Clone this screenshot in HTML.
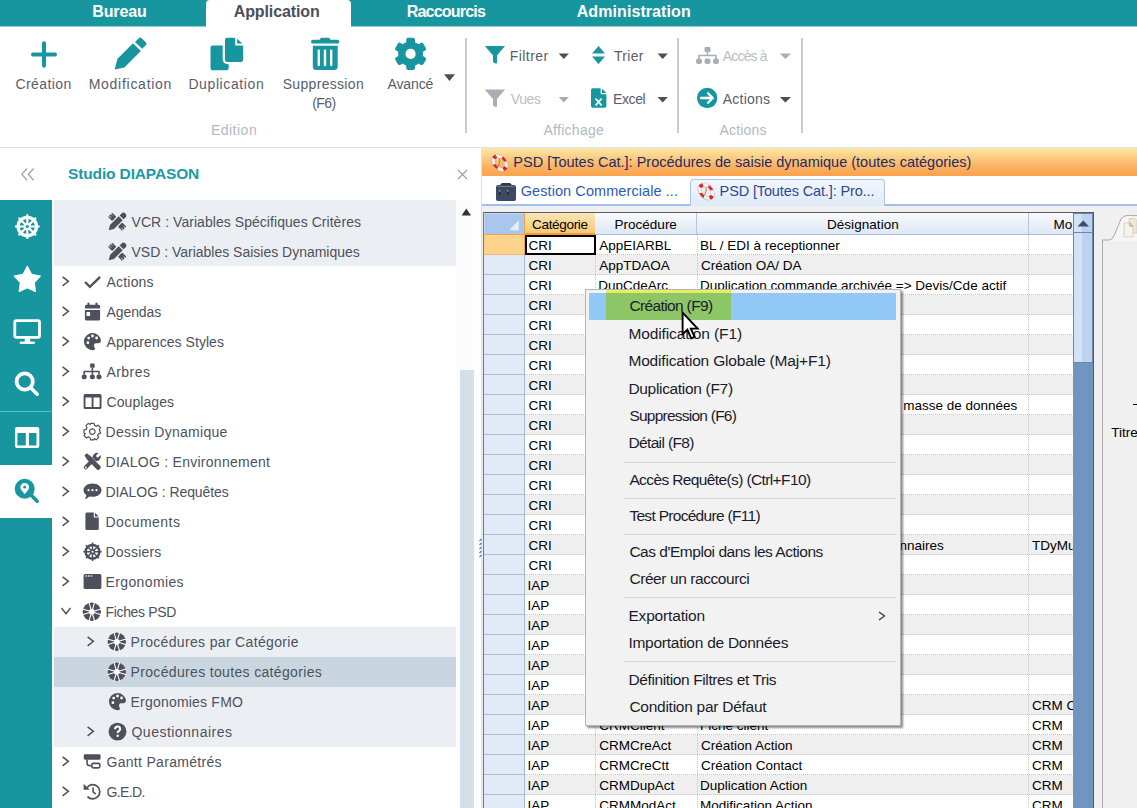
<!DOCTYPE html>
<html><head><meta charset="utf-8">
<style>
*{margin:0;padding:0;box-sizing:border-box}
html,body{width:1137px;height:808px;overflow:hidden}
body{position:relative;background:#fff;font-family:"Liberation Sans",sans-serif;color:#333}
.a{position:absolute;white-space:nowrap}
svg{position:absolute;overflow:visible}
</style></head><body>
<div class="a" style="left:0px;top:0px;width:1137px;height:26px;background:#1896a0;"></div>
<div class="a" style="left:0px;top:26px;width:1137px;height:1px;background:#8fcdd2;"></div>
<div class="a" style="left:206px;top:0px;width:145px;height:27px;background:#fff;border-radius:4px 4px 0 0"></div>
<div class="a" style="left:92.30px;top:4px;font:bold 16px/1 'Liberation Sans';color:#fff;letter-spacing:-0.150px;">Bureau</div>
<div class="a" style="left:233.70px;top:4px;font:bold 16px/1 'Liberation Sans';color:#4a4f5c;letter-spacing:-0.104px;">Application</div>
<div class="a" style="left:406.70px;top:4px;font:bold 16px/1 'Liberation Sans';color:#fff;letter-spacing:-0.785px;">Raccourcis</div>
<div class="a" style="left:576.70px;top:4px;font:bold 16px/1 'Liberation Sans';color:#fff;letter-spacing:0.083px;">Administration</div>
<svg style="left:0;top:0" width="1137" height="150">
<g fill="#1896a0">
 <path d="M44 43.3V65.7M33 54.5H55" stroke="#1896a0" stroke-width="4" stroke-linecap="round" fill="none"/>
 <path d="M117.5 58.7 L133 43.2 L140.8 51 L124.4 67.4 L114.6 69.6 Z"/>
 <path d="M135 42 L139 38 Q140.2 36.8 141.4 38 L146 42.6 Q147.2 43.8 146 45 L142.2 48.8 Z"/>
 <path d="M212.5 45.5 H222.7 V59 Q222.7 64.2 228.7 64.2 V68 Q228.7 70.2 226.5 70.2 H212.5 Q210.5 70.2 210.5 68 V47.5 Q210.5 45.5 212.5 45.5Z"/>
 <path d="M227 37.7 H235.2 V45.5 H243.2 V59.8 Q243.2 61.9 241.2 61.9 H227 Q225 61.9 225 59.8 V39.7 Q225 37.7 227 37.7Z"/>
 <path d="M237.2 38.7 L242.4 43.5 H237.2Z"/>
 <path d="M319.5 39.8 L321 37.7 H329 L330.5 39.8 H337.4 Q339.3 39.8 339.3 41.7 Q339.3 43.6 337.4 43.6 H312.9 Q311 43.6 311 41.7 Q311 39.8 312.9 39.8Z"/>
 <path d="M312.8 45.7 H337.7 V66.5 Q337.7 70.1 334.1 70.1 H316.4 Q312.8 70.1 312.8 66.5Z"/>
 <rect x="317.6" y="49.6" width="2.4" height="16.6" rx="1.1" fill="#fff"/>
 <rect x="323.8" y="49.6" width="2.4" height="16.6" rx="1.1" fill="#fff"/>
 <rect x="330" y="49.6" width="2.4" height="16.6" rx="1.1" fill="#fff"/>
 <g transform="translate(410.6 53.9)">
  <circle r="12.4"/>
  <rect x="-4.4" y="-16.2" width="8.8" height="8" rx="2"/>
  <rect x="-4.4" y="-16.2" width="8.8" height="8" rx="2" transform="rotate(60)"/>
  <rect x="-4.4" y="-16.2" width="8.8" height="8" rx="2" transform="rotate(120)"/>
  <rect x="-4.4" y="-16.2" width="8.8" height="8" rx="2" transform="rotate(180)"/>
  <rect x="-4.4" y="-16.2" width="8.8" height="8" rx="2" transform="rotate(240)"/>
  <rect x="-4.4" y="-16.2" width="8.8" height="8" rx="2" transform="rotate(300)"/>
  <circle r="5.1" fill="#fff"/>
 </g>
</g>
<path d="M444 74.3H455L449.5 81Z" fill="#4a4e5a"/>
</svg>
<div class="a" style="left:15.50px;top:77px;font:14px/1 'Liberation Sans';color:#5a5e6a;letter-spacing:0.396px;">Création</div>
<div class="a" style="left:88.70px;top:77px;font:14px/1 'Liberation Sans';color:#5a5e6a;letter-spacing:0.726px;">Modification</div>
<div class="a" style="left:188.40px;top:77px;font:14px/1 'Liberation Sans';color:#5a5e6a;letter-spacing:0.602px;">Duplication</div>
<div class="a" style="left:282.70px;top:77px;font:14px/1 'Liberation Sans';color:#5a5e6a;letter-spacing:0.316px;">Suppression</div>
<div class="a" style="left:312.20px;top:96px;font:14px/1 'Liberation Sans';color:#5a5e6a;letter-spacing:-0.600px;">(F6)</div>
<div class="a" style="left:387.50px;top:77px;font:14px/1 'Liberation Sans';color:#5a5e6a;letter-spacing:-0.111px;">Avancé</div>
<div class="a" style="left:210.90px;top:123px;font:14px/1 'Liberation Sans';color:#b3b8c0;letter-spacing:0.497px;">Edition</div>
<div class="a" style="left:465px;top:38px;width:2px;height:95px;background:#c9cdd3;"></div>
<div class="a" style="left:677px;top:38px;width:2px;height:95px;background:#c9cdd3;"></div>
<div class="a" style="left:801px;top:38px;width:2px;height:95px;background:#c9cdd3;"></div>
<div class="a" style="left:0px;top:147px;width:1137px;height:1px;background:#dce4eb;"></div>
<svg style="left:0;top:0" width="1137" height="150">
 <path d="M484.8 46 H505 L497 55.5 V62.5 Q497 64 495.5 63.5 L493 62 V55.5Z" fill="#1896a0"/>
 <path d="M484.8 89.6 H505 L497 99 V106 Q497 107.5 495.5 107 L493 105.5 V99Z" fill="#a9aeb6"/>
 <path d="M558.7 53.5H568.9L563.8 59Z" fill="#4a4e5a"/>
 <path d="M558.7 97H568.9L563.8 102.5Z" fill="#a9aeb6"/>
 <path d="M592 53.5 L598.5 46 L605 53.5Z M592 56.5 L598.5 64 L605 56.5Z" fill="#1896a0"/>
 <path d="M657.6 53.5H667.8L662.7 59Z" fill="#4a4e5a"/>
 <path d="M657.6 97H667.8L662.7 102.5Z" fill="#4a4e5a"/>
 <path d="M591 90 Q591 88.3 593 88.3 H600.6 V93 Q600.6 94.3 601.9 94.3 H606.4 V106 Q606.4 107.7 604.7 107.7 H592.7 Q591 107.7 591 106Z" fill="#1896a0"/>
 <path d="M601.9 88.5 L606.4 93 H601.9Z" fill="#1896a0"/>
 <path d="M595.6 98.5 L601.6 105.5 M601.6 98.5 L595.6 105.5" stroke="#fff" stroke-width="1.9"/>
 <path d="M779.8 53.5H791L785.4 59Z" fill="#a9aeb6"/>
 <path d="M779.8 97H791L785.4 102.5Z" fill="#4a4e5a"/>
 <g fill="#a9aeb6">
  <rect x="704.5" y="47" width="6" height="5" rx="1"/>
  <path d="M707.5 52 V55.5 M699 59 V55.5 H716 V59" stroke="#a9aeb6" stroke-width="1.6" fill="none"/>
  <rect x="696" y="58.5" width="6" height="5.4" rx="2.2"/>
  <rect x="704.5" y="58.5" width="6" height="5.4" rx="2.2"/>
  <rect x="713" y="58.5" width="6" height="5.4" rx="2.2"/>
 </g>
 <circle cx="707.2" cy="98" r="10.2" fill="#1896a0"/>
 <path d="M701 98 H712.5 M708 93.2 L712.8 98 L708 102.8" stroke="#fff" stroke-width="2.3" fill="none" stroke-linecap="round" stroke-linejoin="round"/>
</svg>
<div class="a" style="left:509.70px;top:49px;font:14px/1 'Liberation Sans';color:#5a5e6a;letter-spacing:0.448px;">Filtrer</div>
<div class="a" style="left:510.70px;top:92px;font:14px/1 'Liberation Sans';color:#b9bec6;letter-spacing:-0.364px;">Vues</div>
<div class="a" style="left:614.00px;top:49px;font:14px/1 'Liberation Sans';color:#5a5e6a;letter-spacing:0.277px;">Trier</div>
<div class="a" style="left:613.00px;top:92px;font:14px/1 'Liberation Sans';color:#5a5e6a;letter-spacing:-0.381px;">Excel</div>
<div class="a" style="left:722.80px;top:49px;font:14px/1 'Liberation Sans';color:#b9bec6;letter-spacing:-0.836px;">Accès à</div>
<div class="a" style="left:722.80px;top:92px;font:14px/1 'Liberation Sans';color:#5a5e6a;letter-spacing:0.215px;">Actions</div>
<div class="a" style="left:543.50px;top:123px;font:14px/1 'Liberation Sans';color:#b3b8c0;letter-spacing:0.271px;">Affichage</div>
<div class="a" style="left:719.50px;top:123px;font:14px/1 'Liberation Sans';color:#b3b8c0;letter-spacing:0.165px;">Actions</div>
<svg style="left:0;top:0" width="480" height="200">
 <path d="M27 168.5 L21.8 174.3 L27 180.2 M33.6 168.5 L28.4 174.3 L33.6 180.2" stroke="#a3abb6" stroke-width="1.5" fill="none"/>
 <path d="M458 170 L467 179 M467 170 L458 179" stroke="#9a9fa7" stroke-width="1.15" fill="none"/>
</svg>
<div class="a" style="left:68.00px;top:166px;font:bold 15.5px/1 'Liberation Sans';color:#1a9aa8;letter-spacing:-0.135px;">Studio DIAPASON</div>
<div class="a" style="left:0px;top:200px;width:52px;height:608px;background:#1896a0;"></div>
<div class="a" style="left:0px;top:465px;width:52px;height:53px;background:#fff;"></div>
<div class="a" style="left:0px;top:411px;width:52px;height:1px;background:#5fb7bf;"></div>
<div class="a" style="left:54px;top:200px;width:402px;height:66px;background:#ebeff3;"></div>
<div class="a" style="left:54px;top:627px;width:402px;height:120px;background:#ebeff3;"></div>
<div class="a" style="left:54px;top:657px;width:402px;height:30px;background:#c9d6e0;"></div>
<div class="a" style="left:457px;top:201px;width:20px;height:607px;background:#fbfcfd;"></div>
<div class="a" style="left:460px;top:370px;width:14px;height:438px;background:#d5dfe8;"></div>
<svg style="left:0;top:0" width="480" height="808"><path d="M461.6 215.5 H471 L466.3 208.4Z" fill="#333"/></svg>
<svg style="left:0;top:0" width="60" height="808">
 <g transform="translate(27.3 226.5)">
  <circle r="10.8" fill="#fff"/>
  <circle r="7.6" fill="#1896a0"/>
  <g stroke="#fff" stroke-width="2.2">
   <path d="M0 -12.3V12.3M-12.3 0H12.3M-8.7 -8.7L8.7 8.7M8.7 -8.7L-8.7 8.7"/>
  </g>
  <circle r="3.7" fill="#fff"/>
  <circle r="1.6" fill="#1896a0"/>
 </g>
 <path d="M27.30 266.70 L31.53 274.48 L40.23 276.10 L34.15 282.52 L35.29 291.30 L27.30 287.50 L19.31 291.30 L20.45 282.52 L14.37 276.10 L23.07 274.48Z" fill="#fff" stroke="#fff" stroke-width="1.4" stroke-linejoin="round"/>
 <rect x="14.8" y="320.6" width="24.7" height="16.7" rx="1.5" fill="none" stroke="#fff" stroke-width="2.8"/>
 <rect x="24.7" y="338" width="5.4" height="4.5" fill="#fff"/>
 <rect x="19.8" y="341.6" width="15" height="2.3" fill="#fff"/>
 <circle cx="24.7" cy="381.5" r="8.1" fill="none" stroke="#fff" stroke-width="3.8"/>
 <path d="M31.5 388.5 L37.2 394.2" stroke="#fff" stroke-width="3.6" stroke-linecap="round"/>
 <path fill="#fff" fill-rule="evenodd" d="M17 426.9H37.3Q39.3 426.9 39.3 428.9V446.1Q39.3 448.1 37.3 448.1H17Q15 448.1 15 446.1V428.9Q15 426.9 17 426.9Z M17.4 433V445.5H25.8V433Z M28.9 433V445.5H36.5V433Z"/>
 <circle cx="24.7" cy="488.7" r="10" fill="#1896a0"/>
 <path d="M31.5 495.5 L37.2 501.2" stroke="#1896a0" stroke-width="3.6" stroke-linecap="round"/>
 <path d="M24.7 494.3 L21 489.5 Q20.3 488.4 20.3 487.3 A4.4 4.4 0 0 1 29.1 487.3 Q29.1 488.4 28.4 489.5Z" fill="#fff"/>
 <circle cx="24.7" cy="487.2" r="1.4" fill="#1896a0"/>
</svg>
<div class="a" style="left:131.50px;top:215px;font:14px/1 'Liberation Sans';color:#4e515c;letter-spacing:0.051px;">VCR : Variables Spécifiques Critères</div>
<div class="a" style="left:131.50px;top:245px;font:14px/1 'Liberation Sans';color:#4e515c;letter-spacing:-0.006px;">VSD : Variables Saisies Dynamiques</div>
<div class="a" style="left:106.50px;top:275px;font:14px/1 'Liberation Sans';color:#4e515c;letter-spacing:0.198px;">Actions</div>
<div class="a" style="left:106.50px;top:305px;font:14px/1 'Liberation Sans';color:#4e515c;letter-spacing:-0.095px;">Agendas</div>
<div class="a" style="left:106.50px;top:335px;font:14px/1 'Liberation Sans';color:#4e515c;letter-spacing:0.042px;">Apparences Styles</div>
<div class="a" style="left:106.50px;top:365px;font:14px/1 'Liberation Sans';color:#4e515c;letter-spacing:0.433px;">Arbres</div>
<div class="a" style="left:106.50px;top:395px;font:14px/1 'Liberation Sans';color:#4e515c;letter-spacing:0.083px;">Couplages</div>
<div class="a" style="left:105.50px;top:425px;font:14px/1 'Liberation Sans';color:#4e515c;letter-spacing:0.293px;">Dessin Dynamique</div>
<div class="a" style="left:105.50px;top:455px;font:14px/1 'Liberation Sans';color:#4e515c;letter-spacing:0.274px;">DIALOG : Environnement</div>
<div class="a" style="left:105.50px;top:485px;font:14px/1 'Liberation Sans';color:#4e515c;letter-spacing:-0.075px;">DIALOG : Requêtes</div>
<div class="a" style="left:105.50px;top:515px;font:14px/1 'Liberation Sans';color:#4e515c;letter-spacing:0.449px;">Documents</div>
<div class="a" style="left:105.50px;top:545px;font:14px/1 'Liberation Sans';color:#4e515c;letter-spacing:0.192px;">Dossiers</div>
<div class="a" style="left:105.50px;top:575px;font:14px/1 'Liberation Sans';color:#4e515c;letter-spacing:0.377px;">Ergonomies</div>
<div class="a" style="left:105.50px;top:605px;font:14px/1 'Liberation Sans';color:#4e515c;letter-spacing:-0.344px;">Fiches PSD</div>
<div class="a" style="left:130.50px;top:635px;font:14px/1 'Liberation Sans';color:#4e515c;letter-spacing:0.334px;">Procédures par Catégorie</div>
<div class="a" style="left:130.50px;top:665px;font:14px/1 'Liberation Sans';color:#4e515c;letter-spacing:0.341px;">Procédures toutes catégories</div>
<div class="a" style="left:130.50px;top:695px;font:14px/1 'Liberation Sans';color:#4e515c;letter-spacing:0.207px;">Ergonomies FMO</div>
<div class="a" style="left:131.50px;top:725px;font:14px/1 'Liberation Sans';color:#4e515c;letter-spacing:0.480px;">Questionnaires</div>
<div class="a" style="left:106.50px;top:755px;font:14px/1 'Liberation Sans';color:#4e515c;letter-spacing:0.301px;">Gantt Paramétrés</div>
<div class="a" style="left:106.50px;top:785px;font:14px/1 'Liberation Sans';color:#4e515c;letter-spacing:-0.603px;">G.E.D.</div>
<svg style="left:0;top:0" width="480" height="808"><g transform="translate(107.5 211.2)"><g transform="translate(9.4 10.85) rotate(-45)" fill="#4e515c"><rect x="-2.6" y="-9.9" width="6" height="5.8" rx="0.8"/><rect x="-2.6" y="4.1" width="6" height="5.8" rx="0.8"/><path d="M-1 -9.9V-7.3M1.6 -9.9V-7.9M-1 9.9V7.3M1.6 9.9V7.9" stroke="#ebeff3" stroke-width="0.9"/><path d="M-11.6 0 L-7 -2.8 H5.4 V2.8 H-7Z" stroke="#ebeff3" stroke-width="0.9" paint-order="stroke"/><path d="M6.6 -2.8 H9.4 Q12 -2.8 12 0 Q12 2.8 9.4 2.8 H6.6Z"/></g></g><g transform="translate(107.5 241.2)"><g transform="translate(9.4 10.85) rotate(-45)" fill="#4e515c"><rect x="-2.6" y="-9.9" width="6" height="5.8" rx="0.8"/><rect x="-2.6" y="4.1" width="6" height="5.8" rx="0.8"/><path d="M-1 -9.9V-7.3M1.6 -9.9V-7.9M-1 9.9V7.3M1.6 9.9V7.9" stroke="#ebeff3" stroke-width="0.9"/><path d="M-11.6 0 L-7 -2.8 H5.4 V2.8 H-7Z" stroke="#ebeff3" stroke-width="0.9" paint-order="stroke"/><path d="M6.6 -2.8 H9.4 Q12 -2.8 12 0 Q12 2.8 9.4 2.8 H6.6Z"/></g></g><path d="M62.6 276.8 L68.4 281.3 L62.6 285.8" fill="none" stroke="#4e515c" stroke-width="1.5"/><g transform="translate(82.5 271.2)"><path d="M2.6 10.8 L7.4 15.6 L17.6 5.6" fill="none" stroke="#4e515c" stroke-width="2.4"/></g><path d="M62.6 306.8 L68.4 311.3 L62.6 315.8" fill="none" stroke="#4e515c" stroke-width="1.5"/><g transform="translate(82.5 301.2)"><path fill="#4e515c" fill-rule="evenodd" d="M4 3.5H16Q17.6 3.5 17.6 5.1V17.8Q17.6 19.3 16 19.3H4Q2.4 19.3 2.4 17.8V5.1Q2.4 3.5 4 3.5Z M2.4 7.4H17.6V8.8H2.4Z M4 10.8V14.8H7.6V10.8Z"/><rect x="5" y="1.5" width="2" height="3" fill="#4e515c"/><rect x="13" y="1.5" width="2" height="3" fill="#4e515c"/></g><path d="M62.6 336.8 L68.4 341.3 L62.6 345.8" fill="none" stroke="#4e515c" stroke-width="1.5"/><g transform="translate(82.5 331.2)"><path fill="#4e515c" d="M9.8 1.8 A8.6 8.6 0 0 1 18.5 9.6 Q18.5 12 16 12 H13.5 Q11.5 12 11.5 14 Q11.5 15.5 12.3 16.6 Q13 18.8 10.3 19 A8.6 8.6 0 0 1 9.8 1.8Z"/><g fill="#fff"><circle cx="5.4" cy="11.5" r="1.4"/><circle cx="6.2" cy="6.9" r="1.4"/><circle cx="10" cy="4.8" r="1.4"/><circle cx="14.1" cy="6.8" r="1.4"/></g></g><path d="M62.6 366.8 L68.4 371.3 L62.6 375.8" fill="none" stroke="#4e515c" stroke-width="1.5"/><g transform="translate(82.5 361.2)"><g fill="#4e515c"><rect x="7.6" y="2.4" width="4.6" height="4.2" rx="0.8"/><rect x="-0.8" y="13.2" width="5" height="4.8" rx="2"/><rect x="7.4" y="13.2" width="5" height="4.8" rx="2"/><rect x="14" y="13.2" width="5" height="4.8" rx="2"/></g><path d="M9.9 6.5V13.5M1.7 13.5V10.2H16.5V13.5" fill="none" stroke="#4e515c" stroke-width="1.5"/></g><path d="M62.6 396.8 L68.4 401.3 L62.6 405.8" fill="none" stroke="#4e515c" stroke-width="1.5"/><g transform="translate(82.5 391.2)"><path fill="#4e515c" fill-rule="evenodd" d="M2.6 2.8H17.5Q19 2.8 19 4.3V16.3Q19 17.8 17.5 17.8H2.6Q1.1 17.8 1.1 16.3V4.3Q1.1 2.8 2.6 2.8Z M3 6.2V15.9H9.1V6.2Z M11 6.2V15.9H17.1V6.2Z"/></g><path d="M62.6 426.8 L68.4 431.3 L62.6 435.8" fill="none" stroke="#4e515c" stroke-width="1.5"/><g transform="translate(82.5 421.2)"><g transform="translate(9.8 10.4)" fill="none" stroke="#4e515c" stroke-width="1.2"><path d="M-1.6 -8.3 H1.6 L2.2 -6.2 L3.9 -5.3 L5.9 -6.3 L8.2 -4 L7.1 -2.1 L7.7 -0.1 L8.3 1.6 L6.2 2.3 L5.3 3.9 L6.3 5.9 L4 8.2 L2.1 7.1 L1.6 8.3 H-1.6 L-2.2 6.2 L-3.9 5.3 L-5.9 6.3 L-8.2 4 L-7.1 2.1 L-8.3 1.6 V-1.6 L-6.2 -2.2 L-5.3 -3.9 L-6.3 -5.9 L-4 -8.2 L-2.1 -7.1Z"/><circle r="2.8"/></g></g><path d="M62.6 456.8 L68.4 461.3 L62.6 465.8" fill="none" stroke="#4e515c" stroke-width="1.5"/><g transform="translate(82.5 451.2)"><g fill="#4e515c"><path d="M2 4.2 L4.2 2 L9 5.5 L11 8 L17.8 14.8 Q19 16 17.8 17.2 L16.8 18.2 Q15.6 19.4 14.4 18.2 L7.6 11.4 L5.2 9.2Z"/><path d="M11.5 10.5 L4.8 17.4 Q3.2 19 1.8 17.6 Q0.4 16.2 2 14.6 L8.9 7.9Z"/><path d="M10 6.5 A4.8 4.8 0 0 1 16.2 1.8 L13.6 4.4 L14 6 L15.6 6.4 L18.2 3.8 A4.8 4.8 0 0 1 13.5 10 Z"/></g><circle cx="3.3" cy="16.3" r="0.9" fill="#fff"/></g><path d="M62.6 486.8 L68.4 491.3 L62.6 495.8" fill="none" stroke="#4e515c" stroke-width="1.5"/><g transform="translate(82.5 481.2)"><path fill="#4e515c" d="M10 2.4 C15 2.4 19 5.3 19 9 C19 12.7 15 15.6 10 15.6 Q8.2 15.6 6.8 15.2 Q4.8 17.4 2 18 Q3.8 16 3.9 14 Q1 12 1 9 C1 5.3 5 2.4 10 2.4Z"/><g fill="#fff"><circle cx="6" cy="9" r="1.1"/><circle cx="10" cy="9" r="1.1"/><circle cx="14" cy="9" r="1.1"/></g></g><path d="M62.6 516.8000000000001 L68.4 521.3000000000001 L62.6 525.8000000000001" fill="none" stroke="#4e515c" stroke-width="1.5"/><g transform="translate(82.5 511.20000000000005)"><path fill="#4e515c" d="M4.2 1.3 H11.3 V6.4 H16.3 V17.3 Q16.3 18.8 14.8 18.8 H4.4 Q2.9 18.8 2.9 17.3 V2.8 Q2.9 1.3 4.2 1.3Z M12.4 1.5 L16.2 5.3 H12.4Z"/></g><path d="M62.6 546.8000000000001 L68.4 551.3000000000001 L62.6 555.8000000000001" fill="none" stroke="#4e515c" stroke-width="1.5"/><g transform="translate(82.5 541.2)"><g transform="translate(10 10.6)"><circle r="8.1" fill="#4e515c"/><circle r="5.6" fill="#fff"/><g stroke="#4e515c" stroke-width="1.6"><path d="M0 -9.2V9.2M-9.2 0H9.2M-6.5 -6.5L6.5 6.5M6.5 -6.5L-6.5 6.5"/></g><circle r="2.6" fill="#4e515c"/><circle r="1" fill="#fff"/></g></g><path d="M62.6 576.8000000000001 L68.4 581.3000000000001 L62.6 585.8000000000001" fill="none" stroke="#4e515c" stroke-width="1.5"/><g transform="translate(82.5 571.2)"><path fill="#4e515c" d="M2.6 2.7H17.4Q18.9 2.7 18.9 4.2V16.3Q18.9 17.8 17.4 17.8H2.6Q1.1 17.8 1.1 16.3V4.2Q1.1 2.7 2.6 2.7Z"/><g fill="#fff"><rect x="3" y="4.2" width="1.6" height="1.2"/><rect x="5.6" y="4.2" width="1.6" height="1.2"/><rect x="8.2" y="4.2" width="1.6" height="1.2"/></g></g><path d="M61.5 607.9000000000001 L66 613.7 L70.5 607.9000000000001" fill="none" stroke="#4e515c" stroke-width="1.5"/><g transform="translate(82.5 601.2)"><g transform="translate(9.3 10.6)"><circle r="9.2" fill="#4e515c"/><path d="M0 0L9.37 -2.87M0 0L9.37 2.87M0 0L2.87 9.37M0 0L-2.87 9.37M0 0L-9.37 2.87M0 0L-9.37 -2.87M0 0L-2.87 -9.37M0 0L2.87 -9.37" stroke="#fff" stroke-width="1.1"/><circle r="2.9" fill="#fff"/></g></g><path d="M87.6 636.8000000000001 L93.4 641.3000000000001 L87.6 645.8000000000001" fill="none" stroke="#4e515c" stroke-width="1.5"/><g transform="translate(107.5 631.2)"><g transform="translate(9.3 10.6)"><circle r="9.2" fill="#4e515c"/><path d="M0 0L9.37 -2.87M0 0L9.37 2.87M0 0L2.87 9.37M0 0L-2.87 9.37M0 0L-9.37 2.87M0 0L-9.37 -2.87M0 0L-2.87 -9.37M0 0L2.87 -9.37" stroke="#fff" stroke-width="1.1"/><circle r="2.9" fill="#fff"/></g></g><g transform="translate(107.5 661.2)"><g transform="translate(9.3 10.6)"><circle r="9.2" fill="#4e515c"/><path d="M0 0L9.37 -2.87M0 0L9.37 2.87M0 0L2.87 9.37M0 0L-2.87 9.37M0 0L-9.37 2.87M0 0L-9.37 -2.87M0 0L-2.87 -9.37M0 0L2.87 -9.37" stroke="#fff" stroke-width="1.1"/><circle r="2.9" fill="#fff"/></g></g><g transform="translate(107.5 691.2)"><path fill="#4e515c" d="M9.8 1.8 A8.6 8.6 0 0 1 18.5 9.6 Q18.5 12 16 12 H13.5 Q11.5 12 11.5 14 Q11.5 15.5 12.3 16.6 Q13 18.8 10.3 19 A8.6 8.6 0 0 1 9.8 1.8Z"/><g fill="#fff"><circle cx="5.4" cy="11.5" r="1.4"/><circle cx="6.2" cy="6.9" r="1.4"/><circle cx="10" cy="4.8" r="1.4"/><circle cx="14.1" cy="6.8" r="1.4"/></g></g><path d="M87.6 726.8000000000001 L93.4 731.3000000000001 L87.6 735.8000000000001" fill="none" stroke="#4e515c" stroke-width="1.5"/><g transform="translate(107.5 721.2)"><circle cx="10" cy="10.4" r="8.9" fill="#4e515c"/><path d="M7.6 8 Q7.6 5.4 10.1 5.4 Q12.6 5.4 12.6 7.8 Q12.6 9.2 11.2 10 Q10.2 10.6 10.2 11.8" fill="none" stroke="#fff" stroke-width="2"/><circle cx="10.2" cy="14.6" r="1.2" fill="#fff"/></g><path d="M62.6 756.8000000000001 L68.4 761.3000000000001 L62.6 765.8000000000001" fill="none" stroke="#4e515c" stroke-width="1.5"/><g transform="translate(82.5 751.2)"><rect x="1.3" y="3" width="16.8" height="5.5" rx="1.4" fill="#4e515c"/><path d="M4.6 8.4 V12.4 Q4.6 14.6 7.8 14.6 H9" fill="none" stroke="#4e515c" stroke-width="1.6"/><rect x="9.3" y="12.2" width="8.1" height="4.5" rx="1.6" fill="#fff" stroke="#4e515c" stroke-width="1.6"/></g><path d="M62.6 786.8000000000001 L68.4 791.3000000000001 L62.6 795.8000000000001" fill="none" stroke="#4e515c" stroke-width="1.5"/><g transform="translate(82.5 781.2)"><path d="M4.6 6.2 A7.1 7.1 0 1 1 5 15.4" fill="none" stroke="#4e515c" stroke-width="1.7"/><path d="M1.1 2.5 L1.1 8.6 L7.2 8.6Z" fill="#4e515c"/><path d="M10.6 6.2 V10.6 L13.2 13" fill="none" stroke="#4e515c" stroke-width="1.6"/></g></svg>
<div class="a" style="left:481px;top:147px;width:1px;height:661px;background:#d6e2ef;"></div>
<div class="a" style="left:474px;top:201px;width:7px;height:607px;background:#fdfdfe;"></div>
<div class="a" style="left:482px;top:148px;width:655px;height:28px;background:linear-gradient(#fde6a6 0%,#fcd58c 25%,#fbb667 60%,#fba24c 100%);"></div>
<div class="a" style="left:482px;top:176px;width:655px;height:28px;background:#fff;"></div>
<div class="a" style="left:482px;top:204px;width:655px;height:2px;background:#9dc0ef;"></div>
<div class="a" style="left:482px;top:206px;width:655px;height:602px;background:#f0f0f0;"></div>
<div class="a" style="left:690px;top:179px;width:195px;height:27px;background:linear-gradient(#f3f7fd,#dfe9f8);border:1px solid #a9c5ec;border-bottom:none;border-radius:4px 4px 0 0"></div>
<svg style="left:0;top:0" width="1137" height="808">
<g transform="translate(499.8 162.8) rotate(48)"><g transform="scale(1 0.72)"><circle r="9.6" fill="none" stroke="#b0a8a0" stroke-width="0.8"/><circle r="5.6" fill="none" stroke="#b0a8a0" stroke-width="0.6"/><circle r="7.6" fill="none" stroke="#f4f2f0" stroke-width="3.6"/>
<circle r="7.6" fill="none" stroke="#e02424" stroke-width="3.6" stroke-dasharray="5.2 6.74" stroke-dashoffset="2.6"/></g>
<path d="M-3.5 -3 Q0 -1 1.5 3.5" fill="none" stroke="#c8703a" stroke-width="1"/></g>
<g transform="translate(706.2 191.5) rotate(48)"><g transform="scale(1 0.72)"><circle r="9.6" fill="none" stroke="#b0a8a0" stroke-width="0.8"/><circle r="5.6" fill="none" stroke="#b0a8a0" stroke-width="0.6"/><circle r="7.6" fill="none" stroke="#f4f2f0" stroke-width="3.6"/>
<circle r="7.6" fill="none" stroke="#e02424" stroke-width="3.6" stroke-dasharray="5.2 6.74" stroke-dashoffset="2.6"/></g>
<path d="M-3.5 -3 Q0 -1 1.5 3.5" fill="none" stroke="#c8703a" stroke-width="1"/></g>
<g>
 <path d="M498 185 H514 Q516 185 516 187 V199 Q516 201 514 201 H498 Q496 201 496 199 V187 Q496 185 498 185Z" fill="#3b4a62"/>
 <path d="M500 185 L502 183 H510 L512 185Z" fill="#2e3a4c"/>
 <path d="M497 186.5 H514.5" stroke="#6a7a8e" stroke-width="1"/>
 <rect x="499" y="190" width="1.4" height="5" fill="#1e2836"/><rect x="507" y="190" width="1.4" height="5" fill="#1e2836"/><rect x="499" y="190" width="1.4" height="1.6" fill="#c8a040"/><rect x="507" y="190" width="1.4" height="1.6" fill="#c8a040"/>
</g>
</svg>
<div class="a" style="left:513.30px;top:155px;font:14.5px/1 'Liberation Sans';color:#1e2c66;letter-spacing:0.005px;">PSD [Toutes Cat.]: Procédures de saisie dynamique (toutes catégories)</div>
<div class="a" style="left:520.70px;top:184px;font:14.5px/1 'Liberation Sans';color:#2c5bb6;letter-spacing:0.082px;">Gestion Commerciale ...</div>
<div class="a" style="left:719.60px;top:184px;font:14.5px/1 'Liberation Sans';color:#2a4896;letter-spacing:-0.130px;">PSD [Toutes Cat.]: Pro...</div>
<div class="a" style="left:483px;top:212px;width:611px;height:1px;background:#5c5c5c;"></div>
<div class="a" style="left:483px;top:212px;width:1px;height:596px;background:#6c7888;"></div>
<div class="a" style="left:1093px;top:212px;width:1px;height:596px;background:#4c5a6c;"></div>
<div class="a" style="left:484px;top:213px;width:589px;height:21px;background:linear-gradient(#f9fbfe,#dde6f2);"></div>
<div class="a" style="left:484px;top:234px;width:589px;height:1px;background:#a7bfdc;"></div>
<div class="a" style="left:484px;top:213px;width:40px;height:21px;background:#a9c6ec;border-left:1px solid #c4d8f3;border-top:1px solid #c4d8f3"></div>
<div class="a" style="left:484px;top:234px;width:40px;height:1px;background:#f5a24a;"></div>
<div class="a" style="left:524px;top:213px;width:71px;height:21px;background:linear-gradient(#fbe6b6,#f6c673);"></div>
<div class="a" style="left:524px;top:233px;width:71px;height:2px;background:#f39c3a;"></div>
<div class="a" style="left:524px;top:213px;width:1px;height:42px;background:#f2a448;"></div>
<div class="a" style="left:696px;top:213px;width:1px;height:21px;background:#b3c8e2;"></div>
<div class="a" style="left:1028px;top:213px;width:1px;height:21px;background:#b3c8e2;"></div>
<svg style="left:0;top:0" width="1137" height="808"><path d="M509 230.2 H518.8 V220.3Z" fill="#e6edf8"/></svg>
<div class="a" style="left:532.00px;top:218px;font:13.5px/1 'Liberation Sans';color:#000;letter-spacing:-0.316px;">Catégorie</div>
<div class="a" style="left:614.60px;top:218px;font:13.5px/1 'Liberation Sans';color:#000;">Procédure</div>
<div class="a" style="left:826.90px;top:218px;font:13.5px/1 'Liberation Sans';color:#000;letter-spacing:0.061px;">Désignation</div>
<div class="a" style="left:1053.50px;top:218px;font:13.5px/1 'Liberation Sans';color:#000;width:18px;overflow:hidden">Mo</div>
<div class="a" style="left:525px;top:235px;width:548px;height:573px;background:#fff;"></div>
<div class="a" style="left:484px;top:235px;width:40px;height:573px;background:#e2eaf7;"></div>
<div class="a" style="left:524px;top:235px;width:1px;height:573px;background:#a3bbd7;"></div>
<div class="a" style="left:484px;top:254px;width:40px;height:1px;background:#a9bed7;"></div>
<div class="a" style="left:525px;top:255px;width:548px;height:20px;background:#efefef;"></div>
<div class="a" style="left:484px;top:274px;width:40px;height:1px;background:#a9bed7;"></div>
<div class="a" style="left:484px;top:294px;width:40px;height:1px;background:#a9bed7;"></div>
<div class="a" style="left:525px;top:295px;width:548px;height:20px;background:#efefef;"></div>
<div class="a" style="left:484px;top:314px;width:40px;height:1px;background:#a9bed7;"></div>
<div class="a" style="left:484px;top:334px;width:40px;height:1px;background:#a9bed7;"></div>
<div class="a" style="left:525px;top:335px;width:548px;height:20px;background:#efefef;"></div>
<div class="a" style="left:484px;top:354px;width:40px;height:1px;background:#a9bed7;"></div>
<div class="a" style="left:484px;top:374px;width:40px;height:1px;background:#a9bed7;"></div>
<div class="a" style="left:525px;top:375px;width:548px;height:20px;background:#efefef;"></div>
<div class="a" style="left:484px;top:394px;width:40px;height:1px;background:#a9bed7;"></div>
<div class="a" style="left:484px;top:414px;width:40px;height:1px;background:#a9bed7;"></div>
<div class="a" style="left:525px;top:415px;width:548px;height:20px;background:#efefef;"></div>
<div class="a" style="left:484px;top:434px;width:40px;height:1px;background:#a9bed7;"></div>
<div class="a" style="left:484px;top:454px;width:40px;height:1px;background:#a9bed7;"></div>
<div class="a" style="left:525px;top:455px;width:548px;height:20px;background:#efefef;"></div>
<div class="a" style="left:484px;top:474px;width:40px;height:1px;background:#a9bed7;"></div>
<div class="a" style="left:484px;top:494px;width:40px;height:1px;background:#a9bed7;"></div>
<div class="a" style="left:525px;top:495px;width:548px;height:20px;background:#efefef;"></div>
<div class="a" style="left:484px;top:514px;width:40px;height:1px;background:#a9bed7;"></div>
<div class="a" style="left:484px;top:534px;width:40px;height:1px;background:#a9bed7;"></div>
<div class="a" style="left:525px;top:535px;width:548px;height:20px;background:#efefef;"></div>
<div class="a" style="left:484px;top:554px;width:40px;height:1px;background:#a9bed7;"></div>
<div class="a" style="left:484px;top:574px;width:40px;height:1px;background:#a9bed7;"></div>
<div class="a" style="left:525px;top:575px;width:548px;height:20px;background:#efefef;"></div>
<div class="a" style="left:484px;top:594px;width:40px;height:1px;background:#a9bed7;"></div>
<div class="a" style="left:484px;top:614px;width:40px;height:1px;background:#a9bed7;"></div>
<div class="a" style="left:525px;top:615px;width:548px;height:20px;background:#efefef;"></div>
<div class="a" style="left:484px;top:634px;width:40px;height:1px;background:#a9bed7;"></div>
<div class="a" style="left:484px;top:654px;width:40px;height:1px;background:#a9bed7;"></div>
<div class="a" style="left:525px;top:655px;width:548px;height:20px;background:#efefef;"></div>
<div class="a" style="left:484px;top:674px;width:40px;height:1px;background:#a9bed7;"></div>
<div class="a" style="left:484px;top:694px;width:40px;height:1px;background:#a9bed7;"></div>
<div class="a" style="left:525px;top:695px;width:548px;height:20px;background:#efefef;"></div>
<div class="a" style="left:484px;top:714px;width:40px;height:1px;background:#a9bed7;"></div>
<div class="a" style="left:484px;top:734px;width:40px;height:1px;background:#a9bed7;"></div>
<div class="a" style="left:525px;top:735px;width:548px;height:20px;background:#efefef;"></div>
<div class="a" style="left:484px;top:754px;width:40px;height:1px;background:#a9bed7;"></div>
<div class="a" style="left:484px;top:774px;width:40px;height:1px;background:#a9bed7;"></div>
<div class="a" style="left:525px;top:775px;width:548px;height:20px;background:#efefef;"></div>
<div class="a" style="left:484px;top:794px;width:40px;height:1px;background:#a9bed7;"></div>
<div class="a" style="left:484px;top:814px;width:40px;height:1px;background:#a9bed7;"></div>
<div class="a" style="left:484px;top:235px;width:40px;height:19px;background:#fdd38c;"></div>
<div class="a" style="left:484px;top:254px;width:40px;height:1px;background:#eab874;"></div>
<div class="a" style="left:524px;top:235px;width:1px;height:20px;background:#f2a448;"></div>
<div class="a" style="left:525px;top:254px;width:548px;height:1px;background:repeating-linear-gradient(to right,#c4c4c4 0 1px,transparent 1px 2px)"></div>
<div class="a" style="left:525px;top:274px;width:548px;height:1px;background:repeating-linear-gradient(to right,#c4c4c4 0 1px,transparent 1px 2px)"></div>
<div class="a" style="left:525px;top:294px;width:548px;height:1px;background:repeating-linear-gradient(to right,#c4c4c4 0 1px,transparent 1px 2px)"></div>
<div class="a" style="left:525px;top:314px;width:548px;height:1px;background:repeating-linear-gradient(to right,#c4c4c4 0 1px,transparent 1px 2px)"></div>
<div class="a" style="left:525px;top:334px;width:548px;height:1px;background:repeating-linear-gradient(to right,#c4c4c4 0 1px,transparent 1px 2px)"></div>
<div class="a" style="left:525px;top:354px;width:548px;height:1px;background:repeating-linear-gradient(to right,#c4c4c4 0 1px,transparent 1px 2px)"></div>
<div class="a" style="left:525px;top:374px;width:548px;height:1px;background:repeating-linear-gradient(to right,#c4c4c4 0 1px,transparent 1px 2px)"></div>
<div class="a" style="left:525px;top:394px;width:548px;height:1px;background:repeating-linear-gradient(to right,#c4c4c4 0 1px,transparent 1px 2px)"></div>
<div class="a" style="left:525px;top:414px;width:548px;height:1px;background:repeating-linear-gradient(to right,#c4c4c4 0 1px,transparent 1px 2px)"></div>
<div class="a" style="left:525px;top:434px;width:548px;height:1px;background:repeating-linear-gradient(to right,#c4c4c4 0 1px,transparent 1px 2px)"></div>
<div class="a" style="left:525px;top:454px;width:548px;height:1px;background:repeating-linear-gradient(to right,#c4c4c4 0 1px,transparent 1px 2px)"></div>
<div class="a" style="left:525px;top:474px;width:548px;height:1px;background:repeating-linear-gradient(to right,#c4c4c4 0 1px,transparent 1px 2px)"></div>
<div class="a" style="left:525px;top:494px;width:548px;height:1px;background:repeating-linear-gradient(to right,#c4c4c4 0 1px,transparent 1px 2px)"></div>
<div class="a" style="left:525px;top:514px;width:548px;height:1px;background:repeating-linear-gradient(to right,#c4c4c4 0 1px,transparent 1px 2px)"></div>
<div class="a" style="left:525px;top:534px;width:548px;height:1px;background:repeating-linear-gradient(to right,#c4c4c4 0 1px,transparent 1px 2px)"></div>
<div class="a" style="left:525px;top:554px;width:548px;height:1px;background:repeating-linear-gradient(to right,#c4c4c4 0 1px,transparent 1px 2px)"></div>
<div class="a" style="left:525px;top:574px;width:548px;height:1px;background:repeating-linear-gradient(to right,#c4c4c4 0 1px,transparent 1px 2px)"></div>
<div class="a" style="left:525px;top:594px;width:548px;height:1px;background:repeating-linear-gradient(to right,#c4c4c4 0 1px,transparent 1px 2px)"></div>
<div class="a" style="left:525px;top:614px;width:548px;height:1px;background:repeating-linear-gradient(to right,#c4c4c4 0 1px,transparent 1px 2px)"></div>
<div class="a" style="left:525px;top:634px;width:548px;height:1px;background:repeating-linear-gradient(to right,#c4c4c4 0 1px,transparent 1px 2px)"></div>
<div class="a" style="left:525px;top:654px;width:548px;height:1px;background:repeating-linear-gradient(to right,#c4c4c4 0 1px,transparent 1px 2px)"></div>
<div class="a" style="left:525px;top:674px;width:548px;height:1px;background:repeating-linear-gradient(to right,#c4c4c4 0 1px,transparent 1px 2px)"></div>
<div class="a" style="left:525px;top:694px;width:548px;height:1px;background:repeating-linear-gradient(to right,#c4c4c4 0 1px,transparent 1px 2px)"></div>
<div class="a" style="left:525px;top:714px;width:548px;height:1px;background:repeating-linear-gradient(to right,#c4c4c4 0 1px,transparent 1px 2px)"></div>
<div class="a" style="left:525px;top:734px;width:548px;height:1px;background:repeating-linear-gradient(to right,#c4c4c4 0 1px,transparent 1px 2px)"></div>
<div class="a" style="left:525px;top:754px;width:548px;height:1px;background:repeating-linear-gradient(to right,#c4c4c4 0 1px,transparent 1px 2px)"></div>
<div class="a" style="left:525px;top:774px;width:548px;height:1px;background:repeating-linear-gradient(to right,#c4c4c4 0 1px,transparent 1px 2px)"></div>
<div class="a" style="left:525px;top:794px;width:548px;height:1px;background:repeating-linear-gradient(to right,#c4c4c4 0 1px,transparent 1px 2px)"></div>
<div class="a" style="left:525px;top:814px;width:548px;height:1px;background:repeating-linear-gradient(to right,#c4c4c4 0 1px,transparent 1px 2px)"></div>
<div class="a" style="left:595px;top:235px;width:1px;height:573px;background-image:repeating-linear-gradient(to bottom,#c6c6c6 0,#c6c6c6 1px,transparent 1px,transparent 2px)"></div>
<div class="a" style="left:697px;top:235px;width:1px;height:573px;background-image:repeating-linear-gradient(to bottom,#c6c6c6 0,#c6c6c6 1px,transparent 1px,transparent 2px)"></div>
<div class="a" style="left:1028px;top:235px;width:1px;height:573px;background-image:repeating-linear-gradient(to bottom,#c6c6c6 0,#c6c6c6 1px,transparent 1px,transparent 2px)"></div>
<div class="a" style="left:525px;top:235px;width:71px;height:20px;background:#fff;border:2px solid #000"></div>
<div class="a" style="left:528.60px;top:239px;font:13.5px/1 'Liberation Sans';color:#000;">CRI</div>
<div class="a" style="left:599.30px;top:239px;font:13.5px/1 'Liberation Sans';color:#000;">AppEIARBL</div>
<div class="a" style="left:700.00px;top:239px;font:13.5px/1 'Liberation Sans';color:#000;">BL / EDI à receptionner</div>
<div class="a" style="left:528.60px;top:259px;font:13.5px/1 'Liberation Sans';color:#000;">CRI</div>
<div class="a" style="left:599.30px;top:259px;font:13.5px/1 'Liberation Sans';color:#000;">AppTDAOA</div>
<div class="a" style="left:701.00px;top:259px;font:13.5px/1 'Liberation Sans';color:#000;">Création OA/ DA</div>
<div class="a" style="left:528.60px;top:279px;font:13.5px/1 'Liberation Sans';color:#000;">CRI</div>
<div class="a" style="left:598.30px;top:279px;font:13.5px/1 'Liberation Sans';color:#000;">DupCdeArc</div>
<div class="a" style="left:700.00px;top:279px;font:13.5px/1 'Liberation Sans';color:#000;">Duplication commande archivée =&gt; Devis/Cde actif</div>
<div class="a" style="left:528.60px;top:299px;font:13.5px/1 'Liberation Sans';color:#000;">CRI</div>
<div class="a" style="left:528.60px;top:319px;font:13.5px/1 'Liberation Sans';color:#000;">CRI</div>
<div class="a" style="left:528.60px;top:339px;font:13.5px/1 'Liberation Sans';color:#000;">CRI</div>
<div class="a" style="left:528.60px;top:359px;font:13.5px/1 'Liberation Sans';color:#000;">CRI</div>
<div class="a" style="left:528.60px;top:379px;font:13.5px/1 'Liberation Sans';color:#000;">CRI</div>
<div class="a" style="left:528.60px;top:399px;font:13.5px/1 'Liberation Sans';color:#000;">CRI</div>
<div class="a" style="left:528.60px;top:419px;font:13.5px/1 'Liberation Sans';color:#000;">CRI</div>
<div class="a" style="left:528.60px;top:439px;font:13.5px/1 'Liberation Sans';color:#000;">CRI</div>
<div class="a" style="left:528.60px;top:459px;font:13.5px/1 'Liberation Sans';color:#000;">CRI</div>
<div class="a" style="left:528.60px;top:479px;font:13.5px/1 'Liberation Sans';color:#000;">CRI</div>
<div class="a" style="left:528.60px;top:499px;font:13.5px/1 'Liberation Sans';color:#000;">CRI</div>
<div class="a" style="left:528.60px;top:519px;font:13.5px/1 'Liberation Sans';color:#000;">CRI</div>
<div class="a" style="left:528.60px;top:539px;font:13.5px/1 'Liberation Sans';color:#000;">CRI</div>
<div class="a" style="left:528.60px;top:559px;font:13.5px/1 'Liberation Sans';color:#000;">CRI</div>
<div class="a" style="left:527.60px;top:579px;font:13.5px/1 'Liberation Sans';color:#000;">IAP</div>
<div class="a" style="left:527.60px;top:599px;font:13.5px/1 'Liberation Sans';color:#000;">IAP</div>
<div class="a" style="left:527.60px;top:619px;font:13.5px/1 'Liberation Sans';color:#000;">IAP</div>
<div class="a" style="left:527.60px;top:639px;font:13.5px/1 'Liberation Sans';color:#000;">IAP</div>
<div class="a" style="left:527.60px;top:659px;font:13.5px/1 'Liberation Sans';color:#000;">IAP</div>
<div class="a" style="left:527.60px;top:679px;font:13.5px/1 'Liberation Sans';color:#000;">IAP</div>
<div class="a" style="left:527.60px;top:699px;font:13.5px/1 'Liberation Sans';color:#000;">IAP</div>
<div class="a" style="left:527.60px;top:719px;font:13.5px/1 'Liberation Sans';color:#000;">IAP</div>
<div class="a" style="left:599.30px;top:719px;font:13.5px/1 'Liberation Sans';color:#000;">CRMClient</div>
<div class="a" style="left:700.00px;top:719px;font:13.5px/1 'Liberation Sans';color:#000;">Fiche client</div>
<div class="a" style="left:1032.00px;top:719px;font:13.5px/1 'Liberation Sans';color:#000;">CRM</div>
<div class="a" style="left:527.60px;top:739px;font:13.5px/1 'Liberation Sans';color:#000;">IAP</div>
<div class="a" style="left:599.30px;top:739px;font:13.5px/1 'Liberation Sans';color:#000;">CRMCreAct</div>
<div class="a" style="left:701.00px;top:739px;font:13.5px/1 'Liberation Sans';color:#000;">Création Action</div>
<div class="a" style="left:1032.00px;top:739px;font:13.5px/1 'Liberation Sans';color:#000;">CRM</div>
<div class="a" style="left:527.60px;top:759px;font:13.5px/1 'Liberation Sans';color:#000;">IAP</div>
<div class="a" style="left:599.30px;top:759px;font:13.5px/1 'Liberation Sans';color:#000;">CRMCreCtt</div>
<div class="a" style="left:701.00px;top:759px;font:13.5px/1 'Liberation Sans';color:#000;">Création Contact</div>
<div class="a" style="left:1032.00px;top:759px;font:13.5px/1 'Liberation Sans';color:#000;">CRM</div>
<div class="a" style="left:527.60px;top:779px;font:13.5px/1 'Liberation Sans';color:#000;">IAP</div>
<div class="a" style="left:599.30px;top:779px;font:13.5px/1 'Liberation Sans';color:#000;">CRMDupAct</div>
<div class="a" style="left:700.00px;top:779px;font:13.5px/1 'Liberation Sans';color:#000;">Duplication Action</div>
<div class="a" style="left:1032.00px;top:779px;font:13.5px/1 'Liberation Sans';color:#000;">CRM</div>
<div class="a" style="left:527.60px;top:799px;font:13.5px/1 'Liberation Sans';color:#000;">IAP</div>
<div class="a" style="left:599.30px;top:799px;font:13.5px/1 'Liberation Sans';color:#000;">CRMModAct</div>
<div class="a" style="left:700.00px;top:799px;font:13.5px/1 'Liberation Sans';color:#000;">Modification Action</div>
<div class="a" style="left:1032.00px;top:799px;font:13.5px/1 'Liberation Sans';color:#000;">CRM</div>
<div class="a" style="left:814.63px;top:399px;font:13.5px/1 'Liberation Sans';color:#000;">Mise à jour en masse de données</div>
<div class="a" style="left:852.95px;top:539px;font:13.5px/1 'Liberation Sans';color:#000;">Questionnaires</div>
<div class="a" style="left:1032.00px;top:539px;font:13.5px/1 'Liberation Sans';color:#000;width:41px;overflow:hidden">TDyMu</div>
<div class="a" style="left:1032.00px;top:699px;font:13.5px/1 'Liberation Sans';color:#000;width:41px;overflow:hidden">CRM C</div>
<div class="a" style="left:1073px;top:213px;width:20px;height:595px;background:#7096c0;"></div>
<div class="a" style="left:1073px;top:232px;width:20px;height:131px;background:linear-gradient(to right,#d3e2f6 0,#d3e2f6 45%,#bcd2f0 45%,#bcd2f0 100%);border:1px solid #6a86aa;border-top:none"></div>
<div class="a" style="left:1073px;top:213px;width:20px;height:20px;background:linear-gradient(to right,#d3e2f6 0,#d3e2f6 45%,#bcd2f0 45%,#bcd2f0 100%);border:1px solid #6a86aa"></div>
<svg style="left:0;top:0" width="1137" height="808"><path d="M1077.5 226.5 H1089 L1083.2 220.5Z" fill="#3c4c6a"/></svg>
<div class="a" style="left:1102px;top:240px;width:35px;height:568px;background:#f0f0f0;border-left:1px solid #a8a8a8"></div>
<svg style="left:0;top:0" width="1137" height="808"><path d="M1102 241 H1109 Q1112 240 1114 236 L1121 219 Q1123 215.6 1127 215.6 H1137 V241Z" fill="#f6f6f6"/><path d="M1129 218.5 H1135 L1137 220.5 V233 H1129Z" fill="#efe6da" stroke="#c9bca8" stroke-width="0.6"/><path d="M1124 223 H1130 L1133 226 V237 H1124Z" fill="#f8f3ea" stroke="#c9bca8" stroke-width="0.6"/><path d="M1130 223 V226 H1133" fill="none" stroke="#8a8070" stroke-width="0.8"/></svg>
<svg style="left:0;top:0" width="1137" height="808"><path d="M1102 240 H1109 Q1112 240 1114 236 L1121 219 Q1123 215.6 1127 215.6 H1137" fill="none" stroke="#a8a8a8" stroke-width="1"/></svg>
<div class="a" style="left:1111.30px;top:426px;font:13.5px/1 'Liberation Sans';color:#000;">Titre</div>
<div class="a" style="left:1133px;top:404px;width:4px;height:1px;background:#000;"></div>
<svg style="left:0;top:0" width="1137" height="808"><g fill="#3d7fd8"><path d="M479.5 541 l2 -2 M479.5 545 l2 -2 M479.5 549 l2 -2 M479.5 553 l2 -2 M479.5 557 l2 -2" stroke="#3d7fd8" stroke-width="1.2"/></g></svg>
<div class="a" style="left:585px;top:289px;width:316px;height:437px;background:#f2f2f2;border:1px solid #b4b4b4;box-shadow:2px 2px 2px rgba(0,0,0,0.45)"></div>
<div class="a" style="left:589px;top:293px;width:307px;height:27px;background:#91c8f6;"></div>
<div class="a" style="left:606px;top:290px;width:125px;height:30px;background:#8dc666;"></div>
<div class="a" style="left:606px;top:290px;width:125px;height:3px;background:linear-gradient(#eef064,#e6ea5e);"></div>
<div class="a" style="left:629.40px;top:298px;font:15.5px/1 'Liberation Sans';color:#1b1b2b;letter-spacing:-0.629px;">Création (F9)</div>
<div class="a" style="left:628.40px;top:326px;font:15.5px/1 'Liberation Sans';color:#1b1b2b;letter-spacing:-0.104px;">Modification (F1)</div>
<div class="a" style="left:628.40px;top:353px;font:15.5px/1 'Liberation Sans';color:#1b1b2b;letter-spacing:-0.169px;">Modification Globale (Maj+F1)</div>
<div class="a" style="left:628.40px;top:381px;font:15.5px/1 'Liberation Sans';color:#1b1b2b;letter-spacing:-0.316px;">Duplication (F7)</div>
<div class="a" style="left:629.40px;top:408px;font:15.5px/1 'Liberation Sans';color:#1b1b2b;letter-spacing:-0.761px;">Suppression (F6)</div>
<div class="a" style="left:628.40px;top:435px;font:15.5px/1 'Liberation Sans';color:#1b1b2b;letter-spacing:-0.628px;">Détail (F8)</div>
<div class="a" style="left:629.40px;top:472px;font:15.5px/1 'Liberation Sans';color:#1b1b2b;letter-spacing:-0.616px;">Accès Requête(s) (Ctrl+F10)</div>
<div class="a" style="left:629.40px;top:508px;font:15.5px/1 'Liberation Sans';color:#1b1b2b;letter-spacing:-0.699px;">Test Procédure (F11)</div>
<div class="a" style="left:629.40px;top:544px;font:15.5px/1 'Liberation Sans';color:#1b1b2b;letter-spacing:-0.473px;">Cas d'Emploi dans les Actions</div>
<div class="a" style="left:629.40px;top:571px;font:15.5px/1 'Liberation Sans';color:#1b1b2b;letter-spacing:-0.420px;">Créer un raccourci</div>
<div class="a" style="left:628.40px;top:608px;font:15.5px/1 'Liberation Sans';color:#1b1b2b;letter-spacing:-0.169px;">Exportation</div>
<div class="a" style="left:628.40px;top:635px;font:15.5px/1 'Liberation Sans';color:#1b1b2b;letter-spacing:-0.257px;">Importation de Données</div>
<div class="a" style="left:628.40px;top:672px;font:15.5px/1 'Liberation Sans';color:#1b1b2b;letter-spacing:-0.378px;">Définition Filtres et Tris</div>
<div class="a" style="left:629.40px;top:699px;font:15.5px/1 'Liberation Sans';color:#1b1b2b;letter-spacing:-0.261px;">Condition par Défaut</div>
<div class="a" style="left:624px;top:462px;width:272px;height:1px;background:#d7d7d7;"></div>
<div class="a" style="left:624px;top:498px;width:272px;height:1px;background:#d7d7d7;"></div>
<div class="a" style="left:624px;top:534px;width:272px;height:1px;background:#d7d7d7;"></div>
<div class="a" style="left:624px;top:597px;width:272px;height:1px;background:#d7d7d7;"></div>
<div class="a" style="left:624px;top:661px;width:272px;height:1px;background:#d7d7d7;"></div>
<svg style="left:0;top:0" width="1137" height="808">
 <path d="M879 612 L884.6 616 L879 620" fill="none" stroke="#333" stroke-width="1.2"/>
 <path d="M682.6 312.6 V334.2 L687.4 329.6 L691.3 338.4 L694.6 336.9 L690.8 328.6 H697.6Z" fill="#fff" stroke="#000" stroke-width="1.9" stroke-linejoin="miter"/>
</svg>
</body></html>
